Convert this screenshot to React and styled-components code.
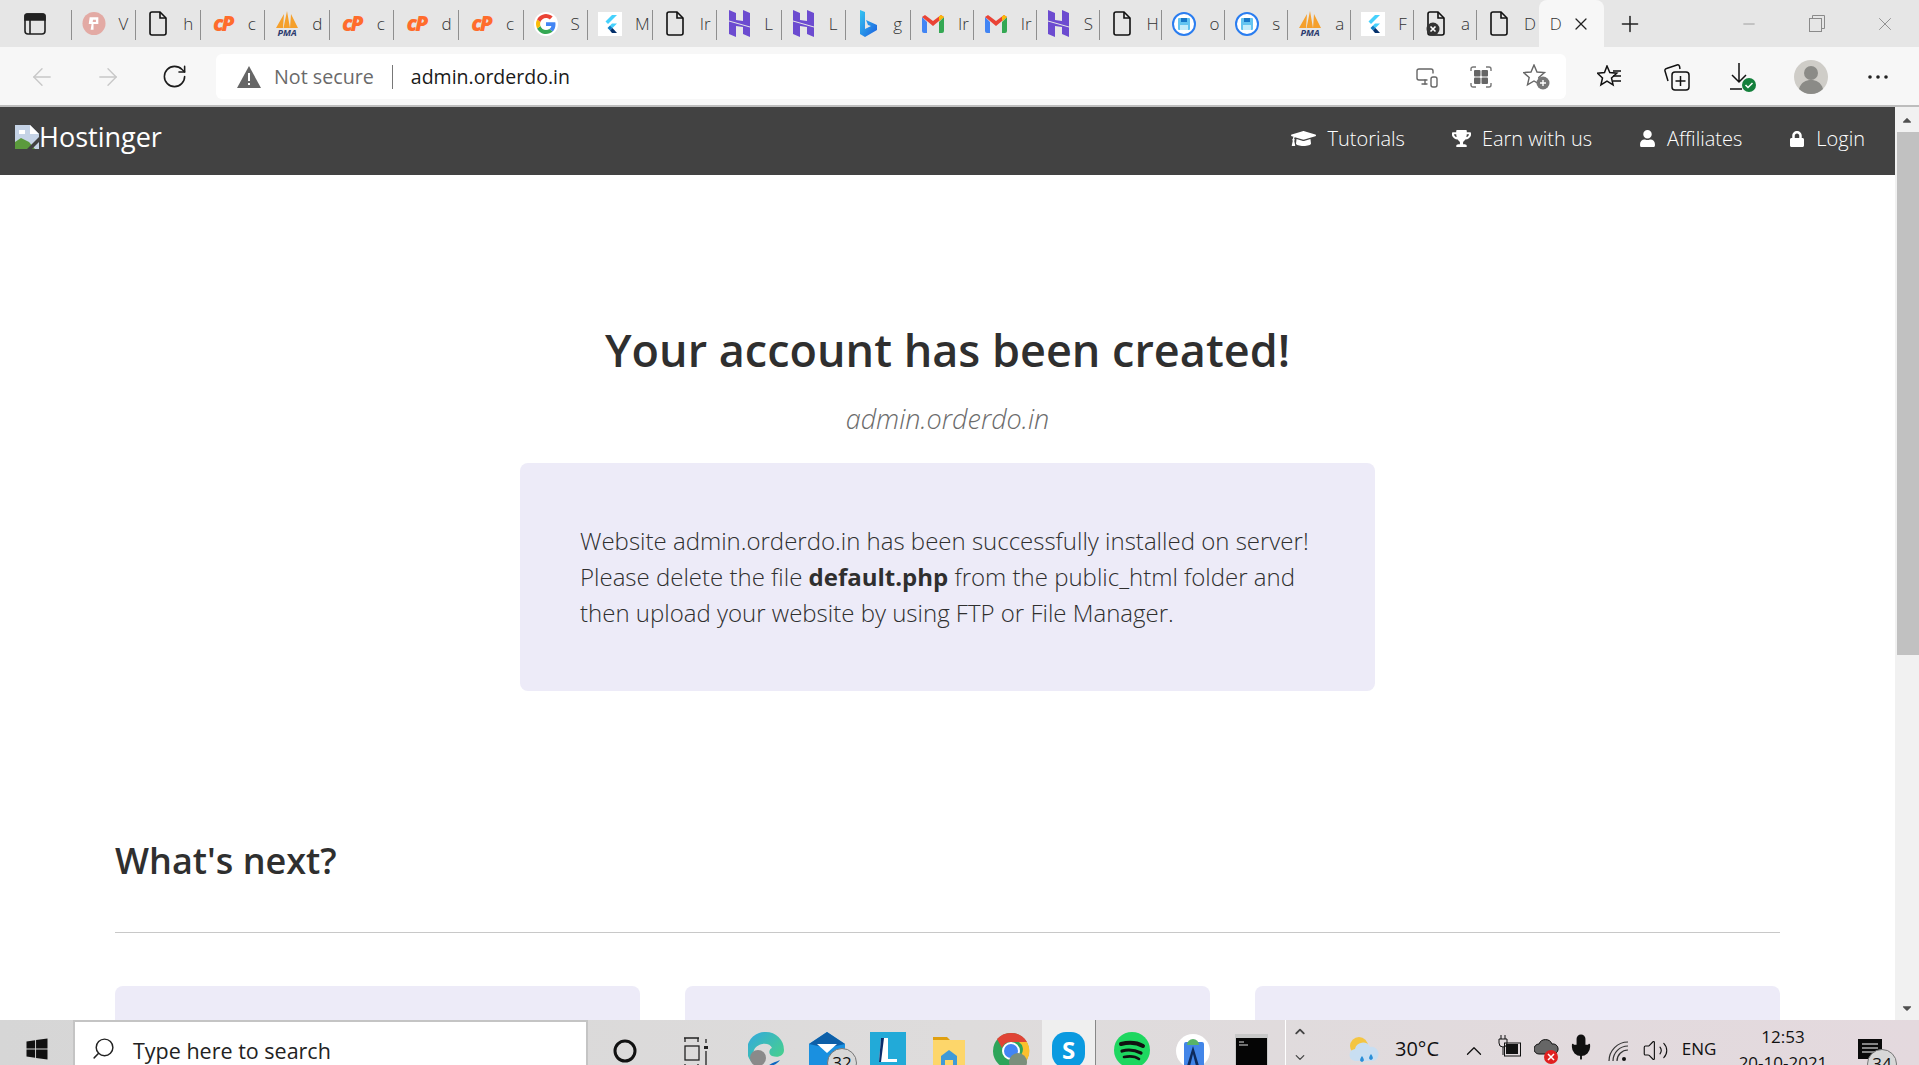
import React from "react";
import styled, { createGlobalStyle } from "styled-components";
import { FaGraduationCap, FaTrophy, FaUser, FaLock, FaCaretUp, FaCaretDown, FaWindows } from "react-icons/fa";
import { ArrowLeft, ArrowRight, RotateCw, Plus, X, Minus, MonitorSmartphone, Search, ChevronUp, ChevronDown, Volume2, Mic } from "lucide-react";

const Global = createGlobalStyle`
  html, body { margin: 0; padding: 0; height: 100%; overflow: hidden; background: #fff; }
  * { box-sizing: border-box; }
  body { font-family: "Open Sans", "Liberation Sans", sans-serif; }
`;

const Screen = styled.div`
  width: 1919px;
  height: 1065px;
  display: flex;
  flex-direction: column;
  overflow: hidden;
`;

/* browser tabs */
const TabStrip = styled.div`
  height: 47px;
  flex: none;
  display: flex;
  align-items: stretch;
  background: #e6e6e6;
`;

const SideButton = styled.div`
  width: 70.6px;
  flex: none;
  display: flex;
  align-items: center;
  justify-content: center;
`;

const Tab = styled.div`
  position: relative;
  width: ${(p) => (p.$wide ? 64.57 : 62.9)}px;
  flex: none;
  display: flex;
  align-items: center;
  padding-left: 11px;
  gap: 13px;
  overflow: hidden;
  &::before {
    content: "";
    position: absolute;
    left: 0;
    top: 10px;
    bottom: 7px;
    width: 1px;
    background: #8f8f8f;
  }
`;

const TabIcon = styled.span`
  width: 24px;
  height: 24px;
  flex: none;
  display: flex;
  align-items: center;
  justify-content: center;
`;

const TabText = styled.span`
  font-size: 17px;
  font-weight: 300;
  color: #333;
  white-space: nowrap;
`;

const ActiveTab = styled.div`
  width: 65px;
  flex: none;
  display: flex;
  align-items: center;
  padding-left: 11px;
  gap: 9px;
  background: #f7f7f7;
  border-radius: 8px 8px 0 0;
  font-size: 17px;
  font-weight: 300;
  color: #333;
`;

const NewTab = styled.div`
  width: 52px;
  flex: none;
  display: flex;
  align-items: center;
  justify-content: center;
`;

const WindowControls = styled.div`
  margin-left: auto;
  display: flex;
  align-items: center;
`;

const WindowButton = styled.div`
  width: 68px;
  display: flex;
  justify-content: center;
  color: #8a8a8a;
`;

const CpMark = styled.span`
  font-size: 21px;
  line-height: 1;
  font-weight: 800;
  font-style: italic;
  letter-spacing: -2px;
  color: #ff6c2c;
`;

/* address bar */
const Toolbar = styled.div`
  height: 60px;
  flex: none;
  display: flex;
  align-items: center;
  background: #f7f7f7;
  border-bottom: 2px solid #bdbdbd;
  padding: 1px 0 0 9px;
`;

const NavButton = styled.div`
  width: 66px;
  flex: none;
  display: flex;
  justify-content: center;
  color: ${(p) => (p.$off ? "#c8c8c8" : "#1c1c1c")};
`;

const AddressBox = styled.div`
  width: 1350px;
  height: 45px;
  margin: 0 10px 0 9px;
  flex: none;
  display: flex;
  align-items: center;
  padding-left: 21px;
  background: #fff;
  border-radius: 6px;
`;

const NotSecure = styled.span`
  margin-left: 13px;
  font-size: 19.7px;
  color: #6a6a6a;
`;

const AddressDivider = styled.span`
  width: 1px;
  height: 24px;
  margin: 0 18px;
  background: #777;
`;

const Url = styled.span`
  font-size: 19.5px;
  color: #1a1a1a;
`;

const AddressTools = styled.div`
  margin-left: auto;
  display: flex;
  align-items: center;
  gap: 31px;
  padding-right: 16px;
  color: #666;
`;

const ToolSlot = styled.div`
  width: 67px;
  flex: none;
  display: flex;
  justify-content: center;
  color: #111;
`;

/* page */
const Viewport = styled.div`
  flex: 1;
  min-height: 0;
  display: flex;
`;

const Page = styled.div`
  flex: 1;
  min-width: 0;
  overflow: hidden;
`;

const TopNav = styled.nav`
  height: 68px;
  display: flex;
  align-items: center;
  justify-content: space-between;
  padding: 0 30px 5px 15px;
  background: #424242;
  color: #fff;
`;

const Brand = styled.div`
  display: flex;
  align-items: center;
  font-size: 27px;
  line-height: 1;
  margin-top: -4px;
`;

const NavLinks = styled.div`
  display: flex;
  gap: 47px;
`;

const NavLink = styled.a`
  display: flex;
  align-items: center;
  gap: 11px;
  font-size: 20px;
  font-weight: 300;
  color: #fff;
`;

const Main = styled.main`
  padding: 145px 115px 0;
`;

const Title = styled.h1`
  margin: 0;
  font-size: 45px;
  line-height: 60px;
  font-weight: 600;
  text-align: center;
  color: #2f2f2f;
`;

const Domain = styled.p`
  margin: 21px 0 26px;
  font-size: 27px;
  line-height: 36px;
  font-weight: 300;
  font-style: italic;
  text-align: center;
  color: #6b6b6b;
`;

const Notice = styled.div`
  width: 855px;
  margin: 0 auto;
  padding: 60px;
  background: #edebf8;
  border-radius: 8px;
  font-size: 24px;
  line-height: 36px;
  font-weight: 300;
  color: #2f2f2f;
  b { font-weight: 700; }
`;

const NextTitle = styled.h2`
  margin: 145px 0 46px;
  font-size: 36px;
  line-height: 50px;
  font-weight: 600;
  color: #2f2f2f;
`;

const Rule = styled.hr`
  margin: 0 0 53px;
  border: 0;
  border-top: 1px solid #c8c8c8;
`;

const Cards = styled.div`
  display: grid;
  grid-template-columns: repeat(3, 525px);
  gap: 45px;
`;

const Card = styled.div`
  height: 300px;
  background: #edebf8;
  border-radius: 8px;
`;

const Scrollbar = styled.div`
  width: 24px;
  flex: none;
  display: flex;
  flex-direction: column;
  background: #f1f1f1;
  color: #505050;
`;

const ScrollArrow = styled.div`
  height: 25px;
  flex: none;
  display: flex;
  align-items: center;
  justify-content: center;
  font-size: 14px;
`;

const ScrollTrack = styled.div`
  flex: 1;
  min-height: 0;
  padding-left: 2px;
`;

const ScrollThumb = styled.div`
  height: 523px;
  background: #c1c1c1;
`;

/* windows taskbar */
const Taskbar = styled.div`
  height: 45px;
  flex: none;
  display: flex;
  align-items: flex-start;
  overflow: hidden;
  background: linear-gradient(90deg, #d6d6d6, #dedcdc 50%, #e4d9de);
`;

const Slot = styled.div`
  position: relative;
  width: ${(p) => p.$w}px;
  height: 45px;
  flex: none;
  display: flex;
  flex-direction: ${(p) => (p.$col ? "column" : "row")};
  align-items: ${(p) => (p.$col ? "center" : "flex-start")};
  justify-content: ${(p) => (p.$end ? "flex-end" : p.$col ? "flex-start" : "center")};
  gap: ${(p) => (p.$col ? 11 : 0)}px;
  padding-top: ${(p) => p.$top ?? 12}px;
  padding-left: ${(p) => p.$pl ?? 0}px;
  background: ${(p) => (p.$active ? "#efefef" : "transparent")};
  color: #111;
  font-size: ${(p) => p.$size ?? 20}px;
  white-space: nowrap;
`;

const SearchBox = styled.div`
  width: 515px;
  height: 45px;
  flex: none;
  display: flex;
  align-items: flex-start;
  gap: 17px;
  padding: 14px 0 0 16px;
  background: #fff;
  border: 2px solid #c4c4c4;
  border-bottom: 0;
  font-size: 21.5px;
  color: #222;
`;

const SearchGlyph = styled(Search)`
  flex: none;
  transform: scaleX(-1);
`;

const Divider = styled.div`
  width: 1px;
  height: 45px;
  flex: none;
  background: ${(p) => p.$c};
`;

const ClockBox = styled.div`
  width: 110px;
  flex: none;
  text-align: center;
  font-size: 17px;
  line-height: 26px;
  color: #111;
  padding-top: 4px;
`;

const Badge = styled.span`
  position: absolute;
  left: ${(p) => p.$l}px;
  top: ${(p) => p.$t}px;
  width: 30px;
  height: 30px;
  border-radius: 50%;
  background: #d8d8d8;
  border: 1px solid #777;
  font-size: 17px;
  line-height: 28px;
  text-align: center;
  color: #111;
`;

const BadgeHolder = styled.div`
  position: relative;
  width: 24px;
  height: 20px;
`;

const Doc = ({ crash }) => (
  <svg width="20" height="25" viewBox="0 0 20 25" fill="none" stroke="#111" strokeWidth="1.6">
    <path d="M2 3a2 2 0 0 1 2-2h8l6 6v15a2 2 0 0 1-2 2H4a2 2 0 0 1-2-2z" />
    <path d="M12 1v6h6" />
    {crash && <circle cx="7" cy="18" r="6.5" fill="#333" stroke="none" />}
    {crash && <path d="M4.5 15.5l5 5m0-5l-5 5" stroke="#fff" />}
  </svg>
);

const Psiphon = () => (
  <svg width="25" height="25" viewBox="0 0 25 25">
    <circle cx="12.5" cy="12.5" r="12" fill="#e3aaa4" />
    <path d="M8 6h9v7h-5v6H9l1-6H7z M11.5 8.5l-.4 2.5h3.4V8.5z" fill="#fff" fillRule="evenodd" />
  </svg>
);

const Pma = () => (
  <svg width="24" height="26" viewBox="0 0 24 26">
    <path d="M1 17L9 3l-1 14zM8.5 17L12 0l3 17zM15 17l1-14 7 14z" fill="#f5a02c" />
    <text x="12" y="25" textAnchor="middle" fontFamily="Open Sans" fontStyle="italic" fontWeight="700" fontSize="9" fill="#2b3a6e">PMA</text>
  </svg>
);

const Google = () => (
  <svg width="24" height="24" viewBox="0 0 24 24">
    <circle cx="12" cy="12" r="12" fill="#fff" />
    <path d="M21.5 12.2c0-.7-.1-1.300-.2-1.900H12v3.700h5.400a4.600 4.600 0 0 1-2 3l3.200 2.500c1.800-1.700 2.900-4.200 2.900-7.300z" fill="#4285f4" />
    <path d="M12 22c2.700 0 4.900-.9 6.600-2.500L15.400 17c-.9.600-2 1-3.400 1-2.600 0-4.800-1.800-5.600-4.100l-3.300 2.500C4.800 19.800 8.100 22 12 22z" fill="#34a853" />
    <path d="M6.400 13.900a6 6 0 0 1 0-3.800L3.100 7.600a10 10 0 0 0 0 8.800z" fill="#fbbc05" />
    <path d="M12 6c1.500 0 2.800.5 3.800 1.500l2.900-2.900A10 10 0 0 0 3.100 7.600l3.300 2.500C7.200 7.800 9.400 6 12 6z" fill="#ea4335" />
  </svg>
);

const Flutter = () => (
  <svg width="24" height="24" viewBox="0 0 24 24">
    <rect width="24" height="24" fill="#fff" />
    <path d="M14 3h5l-9 9-2.500-2.500z" fill="#45d1fd" />
    <path d="M14 11.500h5l-4.500 4.500 -2.500-2.500z" fill="#45d1fd" />
    <path d="M12 13.500l2.500 2.500-2.500 2.500-2.500-2.500z" fill="#0b7fc7" />
    <path d="M14.500 16l4.500 5h-5l-2-2.500z" fill="#04306b" />
  </svg>
);

const Hostinger = () => (
  <svg width="21" height="27" viewBox="0 0 21 27">
    <path d="M0 0l7 3v7l7 1V0l7 3v24l-7-3v-7l-7-1v11l-7-3z" fill="#6c4bd0" />
    <path d="M0 11l21 6" stroke="#e6e6e6" strokeWidth="1" />
  </svg>
);

const Bing = () => (
  <svg width="18" height="27" viewBox="0 0 18 27">
    <defs>
      <linearGradient id="bg" x1="0" y1="0" x2="1" y2="1">
        <stop offset="0" stopColor="#36c5f0" />
        <stop offset="1" stopColor="#1b5fe0" />
      </linearGradient>
    </defs>
    <path d="M1 0l5 2v17l6-3-3-1-2-5 11 5v5L6 27l-5-3z" fill="url(#bg)" />
  </svg>
);

const Gmail = () => (
  <svg width="22" height="20" viewBox="0 0 22 20">
    <path d="M0 3v14a2 2 0 0 0 2 2h3V8z" fill="#4285f4" />
    <path d="M22 3v14a2 2 0 0 1-2 2h-3V8z" fill="#34a853" />
    <path d="M0 3l5 4 6 5 6-5 5-4-3-2-8 6-8-6z" fill="#ea4335" />
    <path d="M17 7l5-4-3-2-2 1.500z" fill="#fbbc05" />
  </svg>
);

const Disk = () => (
  <svg width="24" height="24" viewBox="0 0 24 24">
    <circle cx="12" cy="12" r="11" fill="#fff" stroke="#2a7df0" strokeWidth="2" />
    <rect x="6" y="6" width="12" height="12" rx="1" fill="#64c4f0" />
    <rect x="9" y="6" width="6" height="4" fill="#1878c8" />
    <rect x="8" y="13" width="8" height="5" fill="#c4ecfa" />
  </svg>
);

const tabs = [
  [<Psiphon />, "V"],
  [<Doc />, "h"],
  [<CpMark>cP</CpMark>, "c"],
  [<Pma />, "d"],
  [<CpMark>cP</CpMark>, "c"],
  [<CpMark>cP</CpMark>, "d"],
  [<CpMark>cP</CpMark>, "c"],
  [<Google />, "S"],
  [<Flutter />, "M"],
  [<Doc />, "Ir"],
  [<Hostinger />, "L"],
  [<Hostinger />, "L"],
  [<Bing />, "g"],
  [<Gmail />, "Ir"],
  [<Gmail />, "Ir"],
  [<Hostinger />, "S"],
  [<Doc />, "H"],
  [<Disk />, "o"],
  [<Disk />, "s"],
  [<Pma />, "a"],
  [<Flutter />, "F"],
  [<Doc crash />, "a"],
  [<Doc />, "D"],
];

const SidebarIcon = () => (
  <svg width="22" height="22" viewBox="0 0 22 22" fill="none" stroke="#222" strokeWidth="1.6">
    <rect x="1" y="1" width="20" height="20" rx="3" />
    <path d="M1 3a2 2 0 0 1 2-2h16a2 2 0 0 1 2 2v4H1z" fill="#222" />
    <path d="M6 7v14" />
  </svg>
);

const RestoreIcon = () => (
  <svg width="16" height="17" viewBox="0 0 16 17" fill="none" stroke="currentColor">
    <rect x=".5" y="3.500" width="12" height="13" />
    <path d="M3.500 3.500v-3h12v13h-3" />
  </svg>
);

const WarnIcon = () => (
  <svg width="24" height="22" viewBox="0 0 24 22">
    <path d="M12 0l12 22H0z" fill="#666" />
    <path d="M11 7h2v8h-2zM11 17h2v2h-2z" fill="#fff" />
  </svg>
);

const QrIcon = () => (
  <svg width="22" height="22" viewBox="0 0 22 22" fill="none" stroke="#777" strokeWidth="1.4">
    <path d="M1 5V3a2 2 0 0 1 2-2h3M16 1h3a2 2 0 0 1 2 2v2M21 17v2a2 2 0 0 1-2 2h-3M6 21H3a2 2 0 0 1-2-2v-2" />
    <rect x="4" y="4" width="6.500" height="6.500" rx="1" fill="#666" stroke="none" />
    <rect x="11.500" y="4" width="6.500" height="6.500" rx="1" fill="#666" stroke="none" />
    <rect x="4" y="11.500" width="6.500" height="6.500" rx="1" fill="#666" stroke="none" />
    <rect x="11.500" y="11.500" width="6.500" height="6.500" rx="1" fill="#666" stroke="none" />
  </svg>
);

const StarAdd = () => (
  <svg width="27" height="26" viewBox="0 0 27 26" fill="none" stroke="#666" strokeWidth="1.4">
    <path d="M11 1l3 7 7.500.6-5.700 4.900 1.700 7.300-6.500-3.800-6.500 3.800 1.700-7.300L.5 8.600 8 8z" />
    <circle cx="20" cy="19" r="6.500" fill="#777" stroke="none" />
    <path d="M20 16v6m-3-3h6" stroke="#fff" />
  </svg>
);

const Favorites = () => (
  <svg width="25" height="24" viewBox="0 0 25 24" fill="none" stroke="#111" strokeWidth="1.5">
    <path d="M10 1l2.800 6.600 7 .6-5.300 4.700 1.600 7-6.100-3.700L3.900 20l1.600-7L.5 8.200l7-.6z" />
    <path d="M16 6h8M16 11h8M16 16h8" />
  </svg>
);

const Collections = () => (
  <svg width="26" height="28" viewBox="0 0 26 28" fill="none" stroke="#111" strokeWidth="1.5">
    <path d="M4 18L1 8a2 2 0 0 1 1.500-2.500L13 2a2 2 0 0 1 2.500 1.200L16 6" />
    <rect x="8" y="9" width="17" height="18" rx="3" />
    <path d="M16.500 13v10m-5-5h10" />
  </svg>
);

const DownloadDone = () => (
  <svg width="28" height="30" viewBox="0 0 28 30" fill="none" stroke="#111" strokeWidth="1.5">
    <path d="M9 1v19M2 13l7 7 7-7M0 27h12" />
    <circle cx="19" cy="23" r="7" fill="#14803c" stroke="none" />
    <path d="M15.500 23l2.500 2.500 4.500-4.500" stroke="#fff" />
  </svg>
);

const Avatar = () => (
  <svg width="34" height="34" viewBox="0 0 34 34">
    <circle cx="17" cy="17" r="17" fill="#cfcdc8" />
    <circle cx="17" cy="13" r="7" fill="#8b8b87" />
    <path d="M5 29c2-7 7-9 12-9s10 2 12 9a17 17 0 0 1-24 0z" fill="#8b8b87" />
  </svg>
);

const Dots = () => (
  <svg width="20" height="4" viewBox="0 0 20 4" fill="#222">
    <circle cx="2" cy="2" r="1.800" />
    <circle cx="10" cy="2" r="1.800" />
    <circle cx="18" cy="2" r="1.800" />
  </svg>
);

const BrokenImage = () => (
  <svg width="24" height="24" viewBox="0 0 24 24">
    <path d="M0 0h15l9 9v15H0z" fill="#c5d3e6" />
    <path d="M15 0l9 9h-9z" fill="#fff" />
    <path d="M4 5h6v4H4z" fill="#fff" />
    <path d="M0 24v-7l6-4 8 4 6 7z" fill="#5b9a3c" />
    <path d="M12 24l12-12v5l-7 7z" fill="#424242" />
  </svg>
);

const Cortana = () => (
  <svg width="24" height="24" viewBox="0 0 24 24" fill="none" stroke="#111" strokeWidth="3">
    <circle cx="12" cy="12" r="10" />
  </svg>
);

const TaskView = () => (
  <svg width="24" height="32" viewBox="0 0 24 32" fill="none" stroke="#222" strokeWidth="1.3">
    <path d="M0 1h15M0 31h15M1 1v4M14 1v4M1 31v-4M14 31v-4" />
    <rect x="1" y="9" width="14" height="14" />
    <path d="M22 2v4M22 14v14" />
    <rect x="20" y="9" width="4" height="3" fill="#222" stroke="none" />
  </svg>
);

const Edge = () => (
  <svg width="36" height="36" viewBox="0 0 36 36">
    <defs>
      <linearGradient id="eg" x1="0" y1="0" x2="1" y2="1">
        <stop offset="0" stopColor="#32a8e0" />
        <stop offset="1" stopColor="#4cd87c" />
      </linearGradient>
    </defs>
    <path d="M18 0a18 18 0 0 1 18 18c0 6-6 8-12 6-4-2-3-7 0-8-2-6-14-6-18 2-3 8 1 16 10 18A18 18 0 0 1 18 0z" fill="url(#eg)" />
    <circle cx="10" cy="26" r="8" fill="#8a8a8a" />
    <path d="M20 34c5 0 9-2 12-6-4 2-9 3-12 6z" fill="#0c66c0" />
  </svg>
);

const Mail = () => (
  <svg width="38" height="36" viewBox="0 0 38 36">
    <path d="M0 12L18 0l18 12v24H0z" fill="#1a90e0" />
    <path d="M0 12L18 0l18 12-18 4z" fill="#0d5fa8" />
    <path d="M8 12h20l-10 9z" fill="#fff" />
  </svg>
);

const LTile = () => (
  <svg width="36" height="36" viewBox="0 0 36 36">
    <rect width="36" height="36" fill="#22aad8" />
    <path d="M11 6h7v21h9v3H9z" fill="#fff" />
    <path d="M11 6h3L11 30H9z" fill="#0b2d6b" />
  </svg>
);

const Folder = () => (
  <svg width="32" height="34" viewBox="0 0 32 34">
    <path d="M0 3h14l3 3H0z" fill="#e0a010" />
    <path d="M0 6h32v28H0z" fill="#fdd66a" />
    <path d="M8 22l8-6 8 6v12H8z" fill="#3f9ad8" />
    <rect x="12" y="26" width="8" height="8" fill="#fdd66a" />
  </svg>
);

const Chrome = () => (
  <svg width="38" height="38" viewBox="0 0 38 38">
    <circle cx="19" cy="19" r="18" fill="#2da55a" />
    <path d="M19 1a18 18 0 0 1 16 9H19a9 9 0 0 0-9 6L5 7a18 18 0 0 1 14-6z" fill="#e04436" />
    <path d="M35 10a18 18 0 0 1-14 27l8-14a9 9 0 0 0-2-13z" fill="#fbc02d" />
    <circle cx="19" cy="19" r="8" fill="#4285f4" stroke="#fff" strokeWidth="2" />
    <circle cx="26" cy="30" r="9" fill="#7b8f7c" />
  </svg>
);

const Skype = () => (
  <svg width="33" height="36" viewBox="0 0 33 36">
    <rect width="33" height="36" rx="14" fill="#0a9ae0" />
    <text x="16.500" y="27" textAnchor="middle" fontFamily="Open Sans" fontWeight="700" fontSize="24" fill="#fff">S</text>
  </svg>
);

const Spotify = () => (
  <svg width="36" height="36" viewBox="0 0 36 36" fill="none" stroke="#111" strokeLinecap="round">
    <circle cx="18" cy="18" r="18" fill="#1ed760" stroke="none" />
    <path d="M7 12c8-2 15-2 22 2" strokeWidth="4" />
    <path d="M8 19c7-2 13-1 19 2" strokeWidth="3.200" />
    <path d="M10 25c5-1 11-1 15 2" strokeWidth="2.600" />
  </svg>
);

const AndroidStudio = () => (
  <svg width="34" height="34" viewBox="0 0 34 34">
    <circle cx="17" cy="17" r="17" fill="#fff" />
    <rect x="8" y="8" width="20" height="26" rx="2" fill="#4285e8" />
    <path d="M11 11a6 6 0 0 1 12 0z" fill="#58b368" />
    <path d="M17 12l-6 20h3l3-12 3 12h3z" fill="#0e2a5c" />
  </svg>
);

const Terminal = () => (
  <svg width="33" height="34" viewBox="0 0 33 34">
    <rect width="33" height="34" fill="#c8c8c8" />
    <rect y="4" x="1" width="31" height="28" fill="#050505" />
    <path d="M4 8h5M4 11h9" stroke="#ddd" strokeWidth="1" />
  </svg>
);

const Weather = () => (
  <svg width="32" height="32" viewBox="0 0 32 32">
    <circle cx="11" cy="10" r="9" fill="#f4c542" />
    <path d="M8 25a6 6 0 0 1-1-12 8 8 0 0 1 15-2 7 7 0 0 1 3 14z" fill="#c8def2" />
    <path d="M14 20c2 3 3 5 0 6-3-1-2-3 0-6zM23 18c2 3 3 5 0 6-3-1-2-3 0-6z" fill="#2a8fd8" />
  </svg>
);

const Battery = () => (
  <svg width="24" height="26" viewBox="0 0 24 26" fill="none" stroke="#111">
    <path d="M3 0v4M7 0v4M1 4h8v4a4 4 0 0 1-8 0zM5 12v8" />
    <rect x="6.500" y="8" width="16" height="13" />
    <rect x="8" y="9" width="12" height="10" fill="#111" stroke="none" />
  </svg>
);

const CloudOff = () => (
  <svg width="25" height="30" viewBox="0 0 25 30">
    <path d="M5 17a5 5 0 0 1 0-10 7 7 0 0 1 13 0 5 5 0 0 1 2 10z" fill="#666" stroke="#111" />
    <circle cx="17" cy="20" r="7" fill="#e02020" />
    <path d="M14 17l6 6m0-6l-6 6" stroke="#fff" strokeWidth="1.500" />
  </svg>
);

const Wifi = () => (
  <svg width="21" height="22" viewBox="0 0 21 22" fill="none" stroke="#333" strokeWidth="1.200">
    <path d="M1 20A19 19 0 0 1 20 1M5 20A15 15 0 0 1 20 5M9 20A11 11 0 0 1 20 9" />
    <circle cx="16" cy="18" r="2" fill="#111" stroke="none" />
  </svg>
);

const NotifyIcon = () => (
  <svg width="24" height="20" viewBox="0 0 24 20">
    <rect width="24" height="20" fill="#0a0a0a" />
    <path d="M4 5h16M4 9h16M4 13h16" stroke="#fff" />
  </svg>
);

const App = () => {
  return (
    <Screen>
      <Global />
      <TabStrip>
        <SideButton>
          <SidebarIcon />
        </SideButton>
        {tabs.map(([icon, label], i) => (
          <Tab key={i} $wide={i < 13}>
            <TabIcon>{icon}</TabIcon>
            <TabText>{label}</TabText>
          </Tab>
        ))}
        <ActiveTab>
          D
          <X size={20} strokeWidth={1.5} color="#222" />
        </ActiveTab>
        <NewTab>
          <Plus size={26} strokeWidth={1.4} color="#222" />
        </NewTab>
        <WindowControls>
          <WindowButton>
            <Minus size={18} strokeWidth={1} />
          </WindowButton>
          <WindowButton>
            <RestoreIcon />
          </WindowButton>
          <WindowButton>
            <X size={22} strokeWidth={1} />
          </WindowButton>
        </WindowControls>
      </TabStrip>

      <Toolbar>
        <NavButton $off>
          <ArrowLeft size={28} strokeWidth={1.2} />
        </NavButton>
        <NavButton $off>
          <ArrowRight size={28} strokeWidth={1.2} />
        </NavButton>
        <NavButton>
          <RotateCw size={27} strokeWidth={1.4} />
        </NavButton>
        <AddressBox>
          <WarnIcon />
          <NotSecure>Not secure</NotSecure>
          <AddressDivider />
          <Url>admin.orderdo.in</Url>
          <AddressTools>
            <MonitorSmartphone size={24} strokeWidth={1.4} />
            <QrIcon />
            <StarAdd />
          </AddressTools>
        </AddressBox>
        <ToolSlot>
          <Favorites />
        </ToolSlot>
        <ToolSlot>
          <Collections />
        </ToolSlot>
        <ToolSlot>
          <DownloadDone />
        </ToolSlot>
        <ToolSlot>
          <Avatar />
        </ToolSlot>
        <ToolSlot>
          <Dots />
        </ToolSlot>
      </Toolbar>

      <Viewport>
        <Page>
          <TopNav>
            <Brand>
              <BrokenImage />
              Hostinger
            </Brand>
            <NavLinks>
              <NavLink><FaGraduationCap size={25} />Tutorials</NavLink>
              <NavLink><FaTrophy size={19} />Earn with us</NavLink>
              <NavLink><FaUser size={17} />Affiliates</NavLink>
              <NavLink><FaLock size={16} />Login</NavLink>
            </NavLinks>
          </TopNav>
          <Main>
            <Title>Your account has been created!</Title>
            <Domain>admin.orderdo.in</Domain>
            <Notice>
              Website admin.orderdo.in has been successfully installed on server!
              <br />
              Please delete the file <b>default.php</b> from the public_html folder and then upload your website by using FTP or File Manager.
            </Notice>
            <NextTitle>What's next?</NextTitle>
            <Rule />
            <Cards>
              <Card />
              <Card />
              <Card />
            </Cards>
          </Main>
        </Page>
        <Scrollbar>
          <ScrollArrow><FaCaretUp /></ScrollArrow>
          <ScrollTrack>
            <ScrollThumb />
          </ScrollTrack>
          <ScrollArrow><FaCaretDown /></ScrollArrow>
        </Scrollbar>
      </Viewport>

      <Taskbar>
        <Slot $w={73} $top={17}>
          <FaWindows size={24} />
        </Slot>
        <SearchBox>
          <SearchGlyph size={25} strokeWidth={1.4} />
          Type here to search
        </SearchBox>
        <Slot $w={74} $top={19}><Cortana /></Slot>
        <Slot $w={67} $top={17}><TaskView /></Slot>
        <Slot $w={74}><Edge /></Slot>
        <Slot $w={50}>
          <Mail />
          <Badge $l={24} $t={28}>32</Badge>
        </Slot>
        <Slot $w={70}><LTile /></Slot>
        <Slot $w={52} $top={14}><Folder /></Slot>
        <Slot $w={67} $pl={5}><Chrome /></Slot>
        <Slot $w={53} $active><Skype /></Slot>
        <Divider $c="#888" />
        <Slot $w={72}><Spotify /></Slot>
        <Slot $w={50} $top={14}><AndroidStudio /></Slot>
        <Slot $w={67} $top={14}><Terminal /></Slot>
        <Divider $c="#fff" />
        <Slot $w={27} $top={4} $col>
          <ChevronUp size={22} strokeWidth={3} color="#444" />
          <ChevronDown size={22} strokeWidth={2} color="#444" />
        </Slot>
        <Slot $w={67} $top={16} $end><Weather /></Slot>
        <Slot $w={74} $top={15}>30°C</Slot>
        <Slot $w={40} $top={18}><ChevronUp size={26} strokeWidth={1.2} /></Slot>
        <Slot $w={32} $top={15}><Battery /></Slot>
        <Slot $w={40} $top={17}><CloudOff /></Slot>
        <Slot $w={30} $top={13}><Mic size={28} strokeWidth={1.6} fill="#111" /></Slot>
        <Slot $w={44} $top={21}><Wifi /></Slot>
        <Slot $w={30} $top={17}><Volume2 size={27} strokeWidth={1} /></Slot>
        <Slot $w={58} $top={17} $size={17}>ENG</Slot>
        <ClockBox>
          12:53
          <br />
          20-10-2021
        </ClockBox>
        <Slot $w={64} $top={18}>
          <BadgeHolder>
            <NotifyIcon />
            <Badge $l={9} $t={11}>34</Badge>
          </BadgeHolder>
        </Slot>
      </Taskbar>
    </Screen>
  );
};

export default App;
